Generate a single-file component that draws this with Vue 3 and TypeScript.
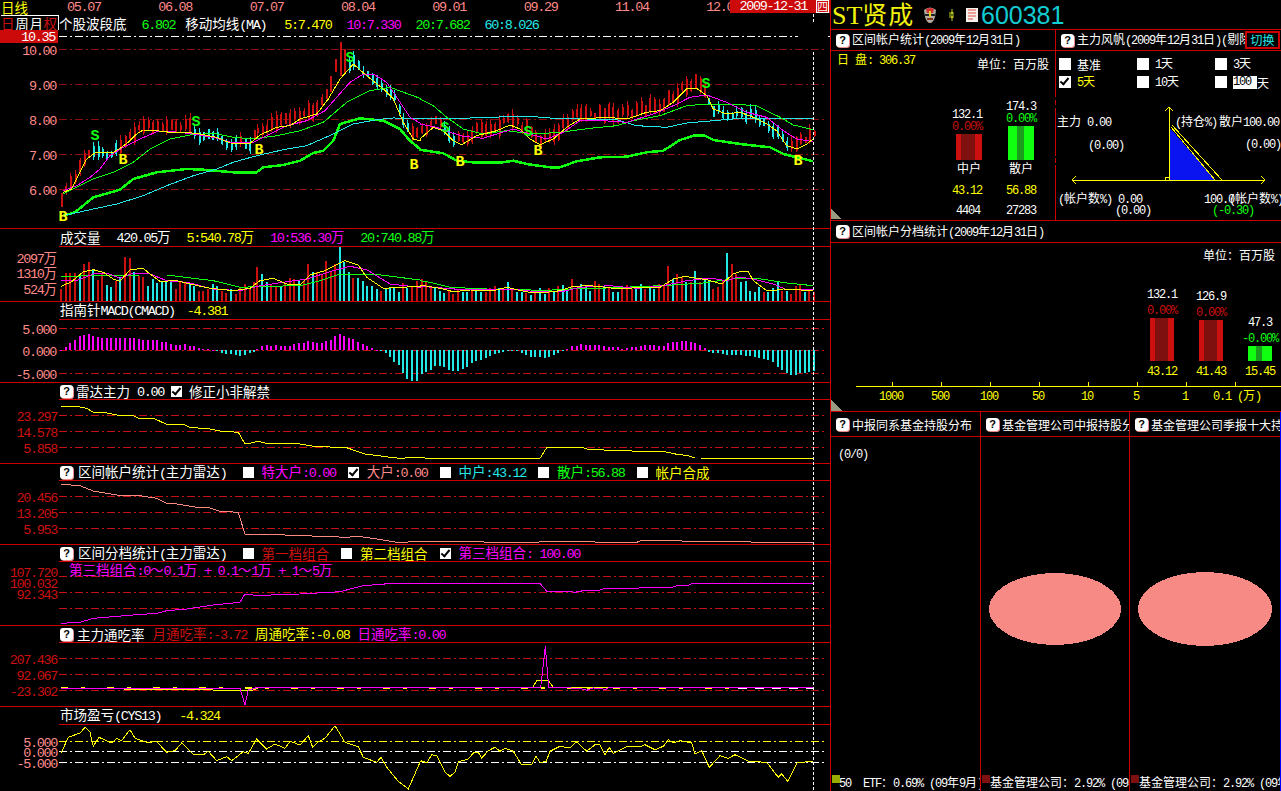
<script setup lang="ts">
import { h } from 'vue';
import type { FunctionalComponent } from 'vue';

type Pt = number[];

// splits latin runs from CJK ones, the two need different metrics
const Txt: FunctionalComponent<{ t: string; svg?: boolean }> = (props) => {
  const tag = props.svg ? 'tspan' : 'span';
  const runs = props.t.match(/[\x00-\x7f]+|[^\x00-\x7f]+/g) ?? [];
  return h(tag, runs.map((r) => h(tag, { class: /^[\x00-\x7f]/.test(r) ? 'lat' : undefined }, r)));
};
Txt.props = { t: String, svg: Boolean };

const parse = (s: string, dx: number, dy: number): Pt[] =>
  s.trim().split(/\s+/).map((p) => {
    const [x, y] = p.split(',').map(Number);
    return [dx + x / 3, dy + y / 3];
  });
const curve = (l: string, r: string, dy: number) => [...parse(l, 0, dy), ...parse(r, 420, dy)];
const toPts = (c: Pt[]) => c.map((p) => `${p[0].toFixed(1)},${p[1].toFixed(1)}`).join(' ');

const interp = (c: Pt[], x: number) => {
  for (let i = 1; i < c.length; i++) {
    if (x <= c[i][0]) {
      const [x0, y0] = c[i - 1];
      const [x1, y1] = c[i];
      return y0 + ((y1 - y0) * (x - x0)) / (x1 - x0 || 1);
    }
  }
  return c[c.length - 1][1];
};

// main chart
const ma5 = curve(
  '190,580 215,570 235,530 260,480 285,462 310,460 340,460 365,445 390,425 410,405 430,393 470,395 510,400 560,400 600,405 650,415 690,432 750,433 780,408 830,385 870,380 900,360 950,345 985,300 1020,240 1060,195 1100,230 1150,270 1180,300 1210,370 1240,420 1260,425',
  '0,420 40,385 70,395 100,425 125,437 170,410 230,395 270,378 300,390 330,420 360,437 400,420 440,385 480,360 560,355 620,360 680,340 720,335 760,310 800,270 830,268 860,290 880,330 920,345 960,340 1000,355 1040,375 1070,395 1100,440 1130,450 1160,435 1180,420',
  0,
);
const ma10 = curve(
  '190,575 230,560 270,535 300,510 330,470 370,445 420,420 470,398 520,398 580,405 640,415 700,432 760,430 800,410 860,380 920,365 975,335 1010,295 1050,250 1090,225 1120,225 1160,250 1200,310 1230,355 1260,372',
  '0,375 50,385 90,400 130,412 190,418 230,405 280,390 330,405 380,420 430,400 480,365 550,365 620,370 700,345 760,320 810,295 860,288 920,310 980,340 1040,355 1090,395 1130,420 1180,428',
  0,
);
const ma20 = curve(
  '190,585 230,565 280,540 340,520 400,490 450,450 510,420 570,408 640,403 700,415 760,420 830,410 900,395 970,370 1040,310 1110,275 1170,265 1260,298',
  '0,300 40,320 80,355 130,390 190,405 260,395 340,405 420,400 510,388 590,380 640,365 720,350 800,320 860,315 930,315 1010,320 1080,355 1120,378 1180,392',
  0,
);
const ma60 = curve(
  '190,650 280,630 350,615 430,590 500,560 580,530 650,510 700,490 770,470 850,452 920,440 1000,405 1060,375 1130,362 1180,357 1260,358',
  '0,358 130,358 200,355 330,352 400,358 500,360 590,362 650,380 740,385 800,372 880,365 960,358 1180,358',
  0,
);
const bottomLine = curve(
  '190,650 225,640 280,595 360,572 400,540 470,520 560,510 610,512 700,520 770,520 790,505 850,498 900,485 940,462 970,455 1000,425 1020,375 1080,358 1150,365 1200,390 1230,425 1260,450',
  '0,452 70,463 110,485 170,491 240,491 280,485 320,495 390,505 420,505 470,487 540,475 620,473 680,460 730,455 780,423 820,410 855,410 880,423 960,435 1050,445 1090,465 1130,475 1180,487',
  0,
);

// volume bars, zoom-x : top : colour
const volL =
  '183:180:r 197:132:r 211:132:r 225:132:r 239:140:c 252:105:r 266:100:r 280:122:c 294:153:r 306:135:r 320:168:c 333:175:c 347:155:r 361:145:c 375:85:r 389:88:r 402:130:c 416:140:r 430:145:r 444:172:c 458:150:c 472:162:c 486:157:c 499:157:c 513:157:c 527:180:r 541:155:r 555:162:r 569:165:c 583:172:c 597:187:r 610:187:r 624:180:r 638:165:c 652:172:c 665:185:r 679:192:r 693:180:c 707:195:r 721:175:r 735:165:r 749:180:r 762:160:r 771:115:r 786:135:c 800:160:c 814:165:r 828:170:r 842:175:c 856:165:r 869:148:r 883:150:r 897:155:c 911:155:r 925:105:r 938:130:c 950:130:r 965:135:r 978:95:r 992:125:r 1005:105:r 1020:53:c 1033:100:c 1047:130:c 1060:148:r 1074:148:c 1088:155:c 1102:170:c 1116:170:c 1130:180:c 1144:185:r 1158:180:c 1170:175:c 1182:175:c 1197:190:c 1208:163:r 1222:178:c 1236:172:r 1250:155:r';
const volR =
  '5:150:r 18:160:r 32:178:r 46:178:c 60:187:c 72:192:c 86:185:r 100:195:r 114:180:r 128:188:c 141:188:c 155:178:r 169:180:c 183:188:c 197:188:r 210:178:r 224:172:r 237:178:c 250:178:r 263:160:c 277:178:r 291:188:c 305:188:c 319:192:r 333:198:c 346:190:r 360:178:c 374:195:c 387:178:r 401:190:c 415:172:r 428:168:c 442:187:c 456:150:r 470:178:r 482:165:c 497:172:c 510:186:c 524:155:r 538:165:r 552:172:c 566:178:r 578:190:c 593:188:c 607:178:r 621:168:r 635:180:r 649:178:c 663:165:c 676:180:r 689:172:c 703:180:c 717:165:r 731:172:r 744:112:r 758:150:c 771:135:r 785:145:r 798:160:c 812:160:r 825:125:c 840:160:r 854:150:c 866:155:c 880:180:r 894:175:r 908:155:r 921:72:c 936:105:r 949:135:r 963:158:c 977:155:c 990:185:c 1005:188:c 1018:175:c 1031:188:r 1044:188:c 1058:178:c 1073:160:c 1086:185:r 1100:185:c 1113:195:r 1128:172:r 1141:168:r 1155:190:c 1168:185:r 1182:190:r';

const parseBars = (s: string, dx: number) =>
  s.trim().split(/\s+/).map((p) => {
    const [x, top, c] = p.split(':');
    return { zx: +x, x: dx + +x / 3, top: +top, c };
  });
const volBars = [...parseBars(volL, 0), ...parseBars(volR, 420)];

// candles follow the 5 day line, the tall ones are set by hand
const noise = (i: number) => {
  const v = Math.sin(i * 12.9898) * 43758.5453;
  return v - Math.floor(v);
};
const forced: Record<number, [number, number]> = {
  183: [194, 208],
  1005: [60, 73],
  1020: [43, 77],
  1033: [50, 75],
  992: [77, 93],
  978: [90, 100],
};
// stretches where the price was falling
const fallen = [[93, 117], [193, 240], [243, 253], [348, 408], [443, 455], [527, 530], [706, 787]];
const candles = volBars.map((b, i) => {
  const c = fallen.some(([a, z]) => b.x >= a && b.x <= z) ? 'c' : 'r';
  const mid = interp(ma5, b.x) + (noise(i) - 0.5) * 7 - (c === 'r' ? 5 : 0);
  const half = 2 + noise(i + 200) * (c === 'r' ? 6 : 4);
  const over = i < 80 ? forced[b.zx] : undefined;
  const top = over ? over[0] : mid - half;
  const bottom = over ? over[1] : mid + half;
  const wick = over ? 0 : noise(i + 400) * 5;
  return { x: b.x, top, h: bottom - top, wTop: top - wick, wH: bottom - top + wick * 1.6, c: over ? 'r' : c };
});

// volume averages
const vol5 = curve(
  '183,172 215,158 250,128 280,122 310,130 340,150 360,157 390,122 430,118 450,135 480,157 530,155 570,165 630,178 700,185 750,178 780,155 820,148 860,165 900,168 930,138 975,125 1035,95 1075,108 1100,145 1150,178 1260,172',
  '0,168 60,178 100,188 150,183 220,185 260,175 290,182 340,192 380,190 420,185 460,172 510,170 530,172 600,180 660,175 720,175 760,150 795,142 830,148 860,152 905,165 940,135 960,128 985,128 1000,155 1040,185 1060,185 1090,180 1180,185',
  230,
);
const vol10 = curve(
  '183,155 230,155 280,135 320,132 360,148 400,132 450,135 500,155 560,160 640,180 720,185 780,170 850,160 920,150 1000,125 1050,112 1100,122 1170,165 1260,175',
  '0,172 130,182 230,183 290,182 350,188 430,187 480,175 570,170 650,178 730,170 800,155 870,147 920,155 950,145 990,148 1060,165 1100,182 1180,183',
  230,
);
const vol20 = curve(
  '183,142 300,140 420,138 500,138 640,155 720,175 800,172 900,170 960,155 1020,135 1120,135 1260,153',
  '0,155 30,160 90,175 200,180 290,180 360,185 450,180 560,177 680,172 760,168 850,162 950,148 1010,148 1100,162 1180,170',
  230,
);

// macd, zoom-x : far end of the bar
const macdBase = 230 + 364 / 3;
const macdL =
  '183:362 197:355 211:343 225:333 239:322 252:317 266:315 280:320 294:324 306:326 320:328 333:328 347:328 361:328 375:328 389:328 402:328 416:330 430:333 444:333 458:333 472:333 486:340 499:340 513:346 527:348 541:348 555:345 569:350 583:352 597:357 610:360 624:360 638:362 652:367 665:373 679:376 693:376 707:378 721:380 735:378 749:373 762:369 771:360 786:352 800:348 814:352 828:348 842:350 856:350 869:350 883:346 897:343 911:343 925:337 938:340 950:343 965:343 978:336 992:333 1005:320 1020:315 1033:320 1047:328 1060:330 1074:338 1088:345 1102:352 1116:358 1130:362 1144:365 1158:372 1170:385 1182:398 1197:408 1208:433 1222:450 1236:455 1250:455';
const macdR =
  '5:435 18:430 32:423 46:412 60:410 72:413 86:423 100:426 114:426 128:420 141:413 155:403 169:395 183:392 197:388 210:382 224:374 237:372 250:368 263:365 277:365 291:365 305:372 319:378 333:383 346:384 360:384 374:386 387:385 401:378 415:372 428:366 442:360 456:352 470:350 482:345 497:347 510:348 524:348 538:348 552:352 566:354 578:354 593:354 607:360 621:358 635:354 649:353 663:350 676:348 689:348 703:348 717:352 731:350 744:342 758:340 771:340 785:336 798:336 812:340 825:342 840:348 854:358 866:368 880:371 894:373 908:375 921:377 936:378 949:378 963:378 977:381 990:381 1005:384 1018:386 1031:390 1044:393 1058:400 1073:413 1086:422 1100:432 1113:437 1128:437 1141:433 1155:431 1168:428 1182:425';
const macdBars = [...parseBars(macdL, 0), ...parseBars(macdR, 420)].map((b) => {
  const end = 230 + b.top / 3;
  return { x: b.x, y: Math.min(end, macdBase), h: Math.max(Math.abs(end - macdBase), 1), up: end < macdBase };
});

const radarLine = curve(
  '183,532 235,533 260,538 280,550 320,552 350,558 400,560 415,568 465,570 500,586 550,586 570,595 630,600 660,606 715,610 735,645 750,643 775,637 800,643 900,645 940,652 1040,656 1095,675 1165,684 1200,688 1250,685',
  '0,685 20,688 360,688 380,656 450,655 490,656 500,660 545,660 560,666 600,665 625,664 640,667 725,667 745,670 770,676 805,680 825,687 1180,688',
  230,
);
const accountLine = curve(
  '183,76 240,80 280,96 350,108 420,110 470,118 500,133 530,135 590,145 630,147 660,157 715,160 735,226 800,226 1040,235 1075,232 1130,240 1190,250 1260,248',
  '0,248 30,247 105,247 230,250 490,248 560,250 650,250 665,244 750,244 800,247 1180,251',
  460,
);
const tierLine = curve(
  '183,493 240,490 280,478 340,473 410,467 470,463 500,455 560,450 640,438 720,430 735,405 775,410 830,407 900,405 1020,398 1090,380 1180,373 1260,373',
  '0,373 360,373 380,397 450,398 465,400 500,393 535,395 555,388 600,388 720,386 750,387 770,380 805,380 815,373 1180,373',
  460,
);
const eatMagenta = curve(
  '183,207 700,208 720,208 735,258 745,213 770,206 1260,205',
  '0,205 350,205 362,205 376,82 386,205 480,208 500,214 520,207 545,208 555,213 565,207 1180,206',
  620,
);
const eatYellow = curve(
  '183,208 720,214 760,213 780,205 1260,206',
  '0,206 338,205 350,185 385,185 400,205 1180,207',
  620,
);
const marketLine = curve(
  '183,403 205,355 240,342 255,325 270,340 280,382 297,355 335,372 350,358 365,365 390,332 405,358 440,370 470,368 500,400 525,395 545,372 580,405 610,408 625,397 650,425 680,413 695,425 730,398 745,403 770,360 800,390 825,375 855,388 870,367 900,378 925,350 938,385 955,368 975,358 1005,320 1035,370 1075,383 1090,415 1130,430 1143,415 1160,445 1195,487 1225,510 1260,430',
  '0,430 5,425 20,432 35,407 50,410 75,460 90,472 105,460 115,428 145,420 160,402 175,400 185,417 205,395 225,385 240,397 255,388 280,397 305,438 335,437 348,412 360,430 378,428 390,397 420,382 450,387 470,368 500,397 525,377 540,377 555,408 568,385 580,403 620,383 660,383 675,377 705,392 730,382 745,362 760,372 780,365 815,372 825,405 845,395 868,445 900,410 925,418 945,407 985,427 1040,430 1075,475 1085,465 1103,487 1132,430 1180,428',
  620,
);

const dates = ['05.07', '06.08', '07.07', '08.04', '09.01', '09.29', '11.04', '12.0'];
const marks = [
  { t: 'S', x: 95, y: 136, c: 'g' },
  { t: 'S', x: 196, y: 122, c: 'g' },
  { t: 'S', x: 350, y: 58, c: 'g' },
  { t: 'S', x: 445, y: 128, c: 'g' },
  { t: 'S', x: 528, y: 132, c: 'g' },
  { t: 'S', x: 706, y: 84, c: 'g' },
  { t: 'B', x: 63, y: 217, c: 'y' },
  { t: 'B', x: 123, y: 160, c: 'y' },
  { t: 'B', x: 259, y: 150, c: 'y' },
  { t: 'B', x: 414, y: 165, c: 'y' },
  { t: 'B', x: 460, y: 162, c: 'y' },
  { t: 'B', x: 538, y: 151, c: 'y' },
  { t: 'B', x: 798, y: 161, c: 'y' },
];

const mainGrid = [
  { y: 50.5, t: '10.00' },
  { y: 85.5, t: '9.00' },
  { y: 120.5, t: '8.00' },
  { y: 155.5, t: '7.00' },
  { y: 190.5, t: '6.00' },
];
const macdGrid = [
  { y: 329.5, t: '5.000' },
  { y: 351.5, t: '0.000' },
  { y: 374.5, t: '-5.000' },
];
const radarGrid = [
  { y: 416.5, t: '23.297' },
  { y: 432.5, t: '14.578' },
  { y: 448.5, t: '5.858' },
];
const accountGrid = [
  { y: 497.5, t: '20.456' },
  { y: 513.5, t: '13.205' },
  { y: 529.5, t: '5.953' },
];
const tierGrid = [
  { y: 577.5, ly: 573, t: '107.720' },
  { y: 593.5, ly: 584, t: '100.032' },
  { y: 609.5, ly: 595, t: '92.343' },
];
const eatGrid = [
  { y: 659.5, t: '207.436' },
  { y: 675.5, t: '92.067' },
  { y: 691.5, t: '-23.302' },
];
const marketGrid = [
  { y: 742.5, t: '5.000', c: 'yl' },
  { y: 752.5, t: '0.000', c: 'wl' },
  { y: 763.5, t: '-5.000', c: 'wl' },
];

const ticks = [892, 941, 990, 1039, 1088, 1137, 1186, 1235];
const tickLabels = [
  { x: 892, t: '1000' },
  { x: 941, t: '500' },
  { x: 990, t: '100' },
  { x: 1039, t: '50' },
  { x: 1088, t: '10' },
  { x: 1137, t: '5' },
  { x: 1186, t: '1' },
];
const tierBars = [
  { x: 1150, w: 24, top: 317, in: 5, inw: 13, red: true, v: '132.1', p: '0.00%', pct: '43.12', vy: 293, py: 309 },
  { x: 1199, w: 24, top: 319, in: 5, inw: 13, red: true, v: '126.9', p: '0.00%', pct: '41.43', vy: 295, py: 311 },
  { x: 1248, w: 24, top: 345, in: 8, inw: 6, red: false, v: '47.3', p: '-0.00%', pct: '15.45', vy: 321, py: 337 },
];
</script>

<template>
  <div class="screen">
    <div class="left">
      <div class="dates">
        <span class="period">日线</span>
        <span v-for="d in dates" :key="d" class="date lat">{{ d }}</span>
      </div>
      <span class="dateflag"><span class="lat">2009-12-31</span><span class="box">四</span></span>

      <section class="pane">
        <div class="mainhead">
          <div class="tabs"><span class="r">日</span><span>周</span><span>月</span><span class="r">权</span></div>
          <div class="items g15">
            <Txt t="个股波段底" />
            <Txt t="6.802" class="cg" />
            <Txt t="移动均线(MA)" class="ma" />
            <Txt t="5:7.470" class="cy" />
            <Txt t="10:7.330" class="cm" />
            <Txt t="20:7.682" class="cg" />
            <Txt t="60:8.026" class="cc" />
          </div>
        </div>
        <svg class="chart" width="830" height="198" viewBox="0 31 830 198">
          <line x1="59" x2="798" y1="37.5" y2="37.5" class="wl" />
          <line x1="828" x2="830" y1="37.5" y2="37.5" class="wl" />
          <rect x="0" y="31" width="58" height="13" class="flag" />
          <text x="55" y="42" class="lat num tw">10.35</text>
          <g v-for="g in mainGrid" :key="g.y">
            <line x1="59" x2="826" :y1="g.y" :y2="g.y" class="dim" />
            <text x="56" :y="g.y + 5" class="lat num ts">{{ g.t }}</text>
          </g>
          <g v-for="(k, i) in candles" :key="i" :class="k.c === 'r' ? 'fr' : 'fc'">
            <rect :x="k.x" :y="k.wTop" width="1" :height="k.wH" />
            <rect :x="k.x - 0.5" :y="k.top" width="2" :height="k.h" />
          </g>
          <polyline :points="toPts(bottomLine)" class="l sg thick" />
          <polyline :points="toPts(ma60)" class="l sc" />
          <polyline :points="toPts(ma20)" class="l sg" />
          <polyline :points="toPts(ma10)" class="l sm" />
          <polyline :points="toPts(ma5)" class="l sy" />
          <text v-for="m in marks" :key="m.t + m.x" :x="m.x" :y="m.y + 5" class="mark" :class="m.c">{{ m.t }}</text>
        </svg>
      </section>

      <section class="pane">
        <div class="head tall items g16">
          <Txt t="成交量" />
          <Txt t="420.05万" />
          <Txt t="5:540.78万" class="cy" />
          <Txt t="10:536.30万" class="cm" />
          <Txt t="20:740.88万" class="cg" />
        </div>
        <svg class="chart" width="830" height="54" viewBox="0 248 830 54">
          <text x="57" y="264" class="num"><Txt svg t="2097万" class="ts" /></text>
          <text x="57" y="279" class="num"><Txt svg t="1310万" class="ts" /></text>
          <text x="57" y="295" class="num"><Txt svg t="524万" class="ts" /></text>
          <rect v-for="b in volBars" :key="b.x" :x="b.x - 1" :y="230 + b.top / 3" width="2" :height="72 - b.top / 3" :class="b.c === 'r' ? 'fr' : 'fc'" />
          <polyline :points="toPts(vol20)" class="l sg" />
          <polyline :points="toPts(vol10)" class="l sm" />
          <polyline :points="toPts(vol5)" class="l sy" />
        </svg>
      </section>

      <section class="pane">
        <div class="head tall items g12">
          <Txt t="指南针MACD(CMACD)" />
          <Txt t="-4.381" class="cy" />
        </div>
        <svg class="chart" width="830" height="62" viewBox="0 321 830 62">
          <g v-for="g in macdGrid" :key="g.y">
            <line x1="59" x2="826" :y1="g.y" :y2="g.y" class="rl" />
            <text x="56" :y="g.y + 5" class="lat num ts">{{ g.t }}</text>
          </g>
          <rect v-for="b in macdBars" :key="b.x" :x="b.x - 1" :y="b.y" width="2" :height="b.h" :class="b.up ? 'fm' : 'fc'" />
        </svg>
      </section>

      <section class="pane">
        <div class="head items g7">
          <span class="help">?</span>
          <Txt t="雷达主力" class="nudge" />
          <Txt t="0.00" />
          <span class="cb on"></span>
          <Txt t="修正小非解禁" />
        </div>
        <svg class="chart" width="830" height="63" viewBox="0 401 830 63">
          <g v-for="g in radarGrid" :key="g.y">
            <line x1="59" x2="826" :y1="g.y" :y2="g.y" class="rl" />
            <text x="57" :y="g.y + 5" class="lat num tr">{{ g.t }}</text>
          </g>
          <polyline :points="toPts(radarLine)" class="l sy" />
        </svg>
      </section>

      <section class="pane">
        <div class="head items g12">
          <span class="help">?</span>
          <Txt t="区间帐户统计(主力雷达)" class="nudge wide" />
          <span class="check"><span class="cb"></span><Txt t="特大户:0.00" class="cm" /></span>
          <span class="check"><span class="cb on"></span><Txt t="大户:0.00" class="cs" /></span>
          <span class="check"><span class="cb"></span><Txt t="中户:43.12" class="cc" /></span>
          <span class="check"><span class="cb"></span><Txt t="散户:56.88" class="cg" /></span>
          <span class="check"><span class="cb"></span><Txt t="帐户合成" class="cy" /></span>
        </div>
        <svg class="chart" width="830" height="63" viewBox="0 482 830 63">
          <g v-for="g in accountGrid" :key="g.y">
            <line x1="59" x2="826" :y1="g.y" :y2="g.y" class="rl" />
            <text x="57" :y="g.y + 5" class="lat num tr">{{ g.t }}</text>
          </g>
          <polyline :points="toPts(accountLine)" class="l ss" />
        </svg>
      </section>

      <section class="pane">
        <div class="head items g12">
          <span class="help">?</span>
          <Txt t="区间分档统计(主力雷达)" class="nudge wide" />
          <span class="check"><span class="cb"></span><Txt t="第一档组合" class="cr" /></span>
          <span class="check"><span class="cb"></span><Txt t="第二档组合" class="cy" /></span>
          <span class="check"><span class="cb on"></span><Txt t="第三档组合: 100.00" class="cm" /></span>
        </div>
        <svg class="chart" width="830" height="63" viewBox="0 563 830 63">
          <g v-for="g in tierGrid" :key="g.y">
            <line x1="59" x2="826" :y1="g.y" :y2="g.y" class="rl" />
            <text x="57" :y="g.ly + 5" class="lat num tr">{{ g.t }}</text>
          </g>
          <text x="69" y="576"><Txt svg t="第三档组合:0～0.1万 + 0.1～1万 + 1～5万" class="tm" /></text>
          <polyline :points="toPts(tierLine)" class="l sm" />
        </svg>
      </section>

      <section class="pane">
        <div class="head items g8">
          <span class="help">?</span>
          <Txt t="主力通吃率" class="nudge" />
          <Txt t="月通吃率:-3.72" class="cr" />
          <Txt t="周通吃率:-0.08" class="cy" />
          <Txt t="日通吃率:0.00" class="cm" />
        </div>
        <svg class="chart" width="830" height="63" viewBox="0 644 830 63">
          <g v-for="g in eatGrid" :key="g.y">
            <line x1="59" x2="826" :y1="g.y" :y2="g.y" class="rl" />
            <text x="57" :y="g.y + 5" class="lat num tr">{{ g.t }}</text>
          </g>
          <polyline :points="toPts(eatYellow)" class="l sy" />
          <line x1="61" x2="736" y1="689" y2="689" class="eatdash" />
          <line x1="738" x2="814" y1="689" y2="689" class="eatwhite" />
          <polyline :points="toPts(eatMagenta)" class="l sm" />
        </svg>
      </section>

      <section class="pane last">
        <div class="head tall items g18">
          <Txt t="市场盈亏(CYS13)" />
          <Txt t="-4.324" class="cy" />
        </div>
        <svg class="chart" width="830" height="66" viewBox="0 726 830 66">
          <g v-for="g in marketGrid" :key="g.y">
            <line x1="59" x2="826" :y1="g.y" :y2="g.y" :class="g.c" />
            <text x="57" :y="g.y + 5" class="lat num ts">{{ g.t }}</text>
          </g>
          <polyline :points="toPts(marketLine)" class="l sy" />
        </svg>
      </section>
    </div>

    <span class="cross top"></span>
    <span class="cross"></span>

    <div class="right">
      <div class="title">
        <span class="name"><span class="st">ST</span>贤成</span>
        <svg class="mask" width="14" height="18" viewBox="0 0 14 18">
          <path d="M1 4 Q7 -1 13 4 L12 11 Q10 17 7 17 Q4 17 2 11Z" fill="#b0aca0" />
          <path d="M3 3 Q7 1 11 3 L10 7 H4Z" fill="#d03030" />
          <path d="M2 8h4v2H2zM8 8h4v2H8z" fill="#202020" />
          <path d="M6 5h2v6H6z" fill="#e8d020" />
          <path d="M4 12h6v2H4z" fill="#803020" />
        </svg>
        <svg class="clip" width="5" height="12" viewBox="0 0 5 12">
          <path d="M2 0h2v3h1v6H4v3H2V9H0V3h2z" fill="#5a6a10" />
          <path d="M2 3h2v2H2zM2 7h2v2H2z" fill="#c8b820" />
        </svg>
        <svg class="page" width="12" height="14" viewBox="0 0 12 14">
          <rect width="12" height="14" fill="#f4f0ec" />
          <path d="M2 2h8M2 5h8M2 8h8M2 11h5" stroke="#e05040" stroke-width="1" />
        </svg>
        <span class="code">600381</span>
      </div>

      <div class="split">
        <div class="col cut">
          <div class="phead"><span class="help">?</span><Txt t="区间帐户统计(2009年12月31日)" /></div>
          <svg class="canvas" width="224" height="168" viewBox="831 51 224 168">
            <text x="837" y="64"><Txt svg t="日 盘: 306.37" class="ty" /></text>
            <text x="1049" y="69" class="end"><Txt svg t="单位：百万股" /></text>
            <text x="967" y="118" class="mid lat">132.1</text>
            <text x="967" y="130" class="mid lat tr">0.00%</text>
            <rect x="956" y="134" width="26" height="26" class="fr" />
            <rect x="961" y="134" width="14" height="26" class="fdr" />
            <text x="969" y="173" class="mid">中户</text>
            <text x="967" y="194" class="mid lat ty">43.12</text>
            <text x="968" y="214" class="mid lat">4404</text>
            <text x="1021" y="110" class="mid lat">174.3</text>
            <text x="1021" y="122" class="mid lat tg">0.00%</text>
            <rect x="1008" y="126" width="26" height="34" class="fg" />
            <rect x="1017" y="126" width="7" height="34" class="fdg" />
            <text x="1021" y="173" class="mid">散户</text>
            <text x="1021" y="194" class="mid lat ty">56.88</text>
            <text x="1021" y="214" class="mid lat">27283</text>
            <path d="M831 209 L842 219 H831Z" class="corner" />
          </svg>
        </div>
        <div class="col">
          <div class="phead"><span class="help">?</span><Txt t="主力风帆(2009年12月31日)(剔除" /><span class="switch">切换</span></div>
          <div class="options">
            <span class="opt"><span class="cb"></span>基准</span>
            <span class="opt"><span class="cb"></span><Txt t="1天" /></span>
            <span class="opt"><span class="cb"></span><Txt t="3天" /></span>
            <span class="opt on"><span class="cb on"></span><Txt t="5天" /></span>
            <span class="opt"><span class="cb"></span><Txt t="10天" /></span>
            <span class="opt"><span class="cb"></span><span class="days lat">100</span>天</span>
          </div>
          <svg class="canvas" width="225" height="129" viewBox="1056 90 225 129">
            <polygon points="1170,128 1170,180 1215,180" class="blue" />
            <polyline points="1171,127 1215,180" class="l sy" />
            <polyline points="1172,125 1222,180" class="l sy" />
            <polyline points="1072,180 1265,180" class="l sy" />
            <polyline points="1076,176 1072,180 1076,184" class="l sy" />
            <polyline points="1261,176 1265,180 1261,184" class="l sy" />
            <polyline points="1169,180 1169,107" class="l sy" />
            <polyline points="1165,111 1169,107 1173,111" class="l sy" />
            <polyline points="1165,180 1165,177 1169,177" class="l sy" />
            <text x="1057" y="126"><Txt svg t="主力 0.00" /></text>
            <text x="1175" y="126"><Txt svg t="(持仓%)" /></text>
            <text x="1219" y="126"><Txt svg t="散户100.00" /></text>
            <text x="1088" y="149"><Txt svg t="(0.00)" /></text>
            <text x="1245" y="148"><Txt svg t="(0.00)" /></text>
            <text x="1058" y="203"><Txt svg t="(帐户数%) 0.00" /></text>
            <text x="1115" y="214"><Txt svg t="(0.00)" /></text>
            <text x="1204" y="203"><Txt svg t="100.0" /></text>
            <text x="1229" y="203"><Txt svg t="(帐户数%)" /></text>
            <text x="1212" y="214"><Txt svg t="(-0.30)" class="tg" /></text>
          </svg>
        </div>
      </div>

      <div class="tier">
        <div class="phead big"><span class="help">?</span><Txt t="区间帐户分档统计(2009年12月31日)" /></div>
        <svg class="canvas" width="450" height="168" viewBox="831 242 450 168">
          <text x="1275" y="259" class="end"><Txt svg t="单位：百万股" /></text>
          <g v-for="b in tierBars" :key="b.x">
            <text :x="b.x + 12" :y="b.vy + 4" class="mid lat">{{ b.v }}</text>
            <text :x="b.x + 12" :y="b.py + 4" class="mid lat" :class="b.red ? 'tr' : 'tg'">{{ b.p }}</text>
            <rect :x="b.x" :y="b.top" :width="b.w" :height="360 - b.top" :class="b.red ? 'fr' : 'fg'" />
            <rect :x="b.x + b.in" :y="b.top" :width="b.inw" :height="360 - b.top" :class="b.red ? 'fdr' : 'fdg'" />
            <text :x="b.x + 12" y="374" class="mid lat ty">{{ b.pct }}</text>
          </g>
          <polyline points="856,385 1281,385" class="l sy" />
          <polyline v-for="x in ticks" :key="x" :points="`${x},381 ${x},385`" class="l sy" />
          <text v-for="l in tickLabels" :key="l.x" :x="l.x - 1" y="399" class="mid lat ty">{{ l.t }}</text>
          <text x="1213" y="399"><Txt svg t="0.1 (万)" class="ty" /></text>
          <path d="M831 399 L842 410 H831Z" class="corner" />
        </svg>
      </div>

      <div class="funds">
        <div class="fund">
          <div class="phead low"><span class="help">?</span><span>中报同系基金持股分布</span></div>
          <svg class="canvas" width="149" height="355" viewBox="831 436 149 355">
            <text x="838" y="457" class="lat">(0/0)</text>
            <text x="839" y="786"><Txt svg t="50  ETF：0.69% (09年9月)" /></text>
            <rect x="832" y="774" width="8" height="8" class="olive" />
          </svg>
        </div>
        <div class="fund">
          <div class="phead low"><span class="help">?</span><span>基金管理公司中报持股分布</span></div>
          <svg class="canvas" width="148" height="355" viewBox="981 436 148 355">
            <ellipse cx="1055" cy="608" rx="66" ry="36" class="pie" />
            <text x="990" y="786"><Txt svg t="基金管理公司：2.92% (09年" /></text>
            <rect x="982" y="774" width="8" height="8" class="fdr" />
          </svg>
        </div>
        <div class="fund lastfund">
          <div class="phead low"><span class="help">?</span><span>基金管理公司季报十大持股</span></div>
          <svg class="canvas" width="150" height="355" viewBox="1130 436 150 355">
            <ellipse cx="1205" cy="608" rx="67" ry="37" class="pie" />
            <text x="1139" y="786"><Txt svg t="基金管理公司：2.92% (09年" /></text>
            <rect x="1131" y="774" width="8" height="8" class="fdr" />
          </svg>
        </div>
      </div>
    </div>
  </div>
</template>

<style scoped>
.screen {
  position: relative;
  display: grid;
  grid-template-columns: 830px 451px;
  width: 1281px;
  height: 791px;
  overflow: hidden;
  background: #000;
  color: #fff;
  font-family: "Noto Sans CJK SC", sans-serif;
  font-size: 13.5px;
  line-height: 15px;
}

.left {
  display: flex;
  flex-direction: column;
  height: 791px;
}

.dates {
  display: grid;
  grid-template-columns: 67px repeat(8, 91.33px);
  height: 16px;
  color: #ff8a8a;
  align-items: end;
}

.period {
  color: #ffff00;
  padding-left: 1px;
}

.dateflag {
  position: absolute;
  left: 730px;
  top: 0;
  width: 100px;
  height: 13px;
  display: flex;
  align-items: center;
  justify-content: flex-end;
  gap: 9px;
  padding-right: 1px;
  box-sizing: border-box;
  background: #cc0a0a;
}

.box {
  border: 1px solid #fff;
  height: 11px;
  width: 11px;
  font-size: 11px;
  line-height: 10px;
  text-align: center;
}

.pane {
  border-bottom: 1px solid #cc0000;
}

.pane.last {
  border-bottom: 0;
}

.mainhead {
  display: flex;
  height: 15px;
}

.tabs {
  display: flex;
  width: 58px;
  box-sizing: border-box;
  border: 1px solid #fff;
  border-width: 1px 1px 0 0;
  margin-left: 1px;
}

.tabs .r {
  color: #cc1010;
}

.tabs span {
  width: 14.2px;
  flex: none;
}

.chart,
.canvas {
  display: block;
  shape-rendering: crispEdges;
}

.items {
  display: flex;
  align-items: center;
  white-space: nowrap;
}

.mainhead .items {
  align-items: flex-start;
  padding-top: 1px;
  height: 15px;
}

.ma {
  margin: 0 3px 0 -5px;
}

.g7 { gap: 7px; }
.g8 { gap: 8px; }
.g12 { gap: 12px; }
.g15 { gap: 15px; }
.g16 { gap: 16px; }
.g18 { gap: 18px; }

.head {
  height: 17px;
  box-sizing: border-box;
  margin-left: 59px;
  padding-left: 1px;
  border-bottom: 1px solid #cc0000;
}

.head.tall {
  height: 18px;
}

.nudge {
  margin-left: -4px;
}

.nudge.wide {
  margin: 0 4px 0 -7px;
}

.check {
  display: inline-flex;
  align-items: center;
  gap: 8px;
}

.help {
  flex: none;
  display: inline-block;
  width: 13px;
  height: 13px;
  border-radius: 3px;
  background: #fff;
  box-shadow: 1px 1px 0 #e88888;
  color: #000;
  font: bold 11px/13px "Liberation Sans", sans-serif;
  text-align: center;
}

.cb {
  position: relative;
  flex: none;
  display: inline-block;
  width: 11px;
  height: 11px;
  background: #fff;
}

.cb.on::after {
  content: '';
  position: absolute;
  left: 3px;
  top: 0;
  width: 3px;
  height: 7px;
  border: solid #000;
  border-width: 0 2px 2px 0;
  transform: rotate(40deg);
}

.cg { color: #10ff10; }
.cy { color: #ffff00; }
.cm { color: #ff00ff; }
.cc { color: #22e8e8; }
.cr { color: #cc1010; }
.cs { color: #ff8a8a; }

svg text {
  fill: #fff;
}

.num {
  text-anchor: end;
}

.tw { fill: #fff; }
.ts { fill: #ff8a8a; }
.tr { fill: #cc1010; }
.ty { fill: #ffff00; }
.tg { fill: #10ff10; }
.tm { fill: #ff00ff; }

.chart line,
.l {
  fill: none;
  stroke-width: 1;
}

.flag { fill: #cc0a0a; }
.dim { stroke: #8c1010; stroke-dasharray: 8 3 2 3; }
.rl { stroke: #c81010; stroke-dasharray: 8 3 2 3; }
.wl { stroke: #fff; stroke-dasharray: 8 3 2 3; }
.yl { stroke: #ffff00; stroke-dasharray: 8 3 2 3; }

.sg { stroke: #10ff10; }
.sy { stroke: #ffff00; }
.sm { stroke: #ff00ff; }
.sc { stroke: #22e8e8; }
.ss { stroke: #ff8a80; }
.thick { stroke-width: 2.5; }

.chart .eatdash {
  stroke: #ffff00;
  stroke-width: 2;
  stroke-dasharray: 7 13 4 22;
}

.chart .eatwhite {
  stroke: #fff;
  stroke-width: 2;
  stroke-dasharray: 9 8;
}

.fr { fill: #cc1010; }
.fc { fill: #22e8e8; }
.fm { fill: #ff00ff; }
.fg { fill: #10ff10; }
.fdr { fill: #7e1010; }
.fdg { fill: #1c9c1c; }
.blue { fill: #0a14f0; }
.corner { fill: #9a9a80; }
.olive { fill: #99aa00; }
.pie { fill: #f88a85; }

.mark {
  font: bold 15px "Liberation Mono", monospace;
  text-anchor: middle;
}

svg text.mark.g { fill: #10ff10; }
svg text.mark.y { fill: #ffff00; }

.cross {
  position: absolute;
  left: 813px;
  top: 52px;
  bottom: 0;
  width: 1px;
  background: repeating-linear-gradient(#fff 0 3px, transparent 3px 5px);
}

.cross.top {
  top: 14px;
  bottom: auto;
  height: 8px;
}

.right {
  display: flex;
  flex-direction: column;
  height: 791px;
  box-sizing: border-box;
  border-left: 1px solid #cc0000;
  font-size: 12px;
}

.right text {
  font-size: 12px;
}

.right .end { text-anchor: end; }
.right .mid { text-anchor: middle; }

.title {
  display: flex;
  align-items: center;
  height: 30px;
  box-sizing: border-box;
  border-bottom: 1px solid #cc0000;
  padding-left: 1px;
}

.name {
  width: 91px;
  font-size: 25px;
  line-height: 28px;
  letter-spacing: 1px;
  color: #f2f20c;
  white-space: nowrap;
}

.st {
  font-family: "Liberation Serif", serif;
  font-size: 26px;
  letter-spacing: 0;
}

.mask {
  margin-right: 12px;
}

.clip {
  margin-right: 12px;
}

.page {
  margin-right: 3px;
}

.code {
  font: 25px/28px "Liberation Sans", sans-serif;
  color: #12ccd4;
}

.split {
  display: grid;
  grid-template-columns: 225px 225px;
  border-bottom: 1px solid #cc0000;
  height: 190px;
}

.col {
  position: relative;
  min-width: 0;
}

.col.cut {
  border-right: 1px solid #cc0000;
  width: 225px;
  box-sizing: border-box;
}

.col.cut::after {
  content: '';
  position: absolute;
  right: -1px;
  top: 67px;
  width: 1px;
  height: 68px;
  background: linear-gradient(
    #000 0 3px,
    #cc0000 3px 8px,
    #000 8px 11px,
    #cc0000 11px 59px,
    #000 59px 61px,
    #cc0000 61px 66px,
    #000 66px 68px
  );
}

.phead {
  position: relative;
  display: flex;
  align-items: center;
  gap: 3px;
  height: 21px;
  box-sizing: border-box;
  padding-left: 5px;
  border-bottom: 1px solid #cc0000;
  white-space: nowrap;
  overflow: hidden;
}

.phead.big {
  height: 22px;
}

.phead.low {
  height: 25px;
}

.switch {
  position: absolute;
  right: 1px;
  top: 1px;
  width: 35px;
  height: 18px;
  box-sizing: border-box;
  border: 2px solid #cc0000;
  background: #000;
  color: #22e8e8;
  line-height: 14px;
  text-align: center;
}

.options {
  display: grid;
  grid-template-columns: 78px 78px 1fr;
  grid-auto-rows: 18px;
  height: 39px;
  box-sizing: border-box;
  padding: 4px 0 0 3px;
  white-space: nowrap;
}

.opt {
  display: flex;
  align-items: center;
  gap: 6px;
}

.opt .cb {
  width: 12px;
  height: 12px;
}

.opt.on {
  color: #ffff00;
}

.days {
  background: #fff;
  color: #000;
  width: 24px;
  height: 13px;
  line-height: 13px;
  margin-right: -6px;
}

.tier {
  height: 191px;
  border-bottom: 1px solid #cc0000;
  box-sizing: border-box;
}

.funds {
  display: grid;
  grid-template-columns: 150px 149px 151px;
  flex: 1;
  min-height: 0;
}

.fund {
  border-right: 1px solid #cc0000;
  overflow: hidden;
}

.fund.lastfund {
  border-right: 1px solid #0000ff;
}
</style>

<style>
body {
  background: #000;
}

.lat {
  font-family: "Liberation Mono", monospace;
  letter-spacing: -0.1em;
  white-space: pre;
}
</style>
